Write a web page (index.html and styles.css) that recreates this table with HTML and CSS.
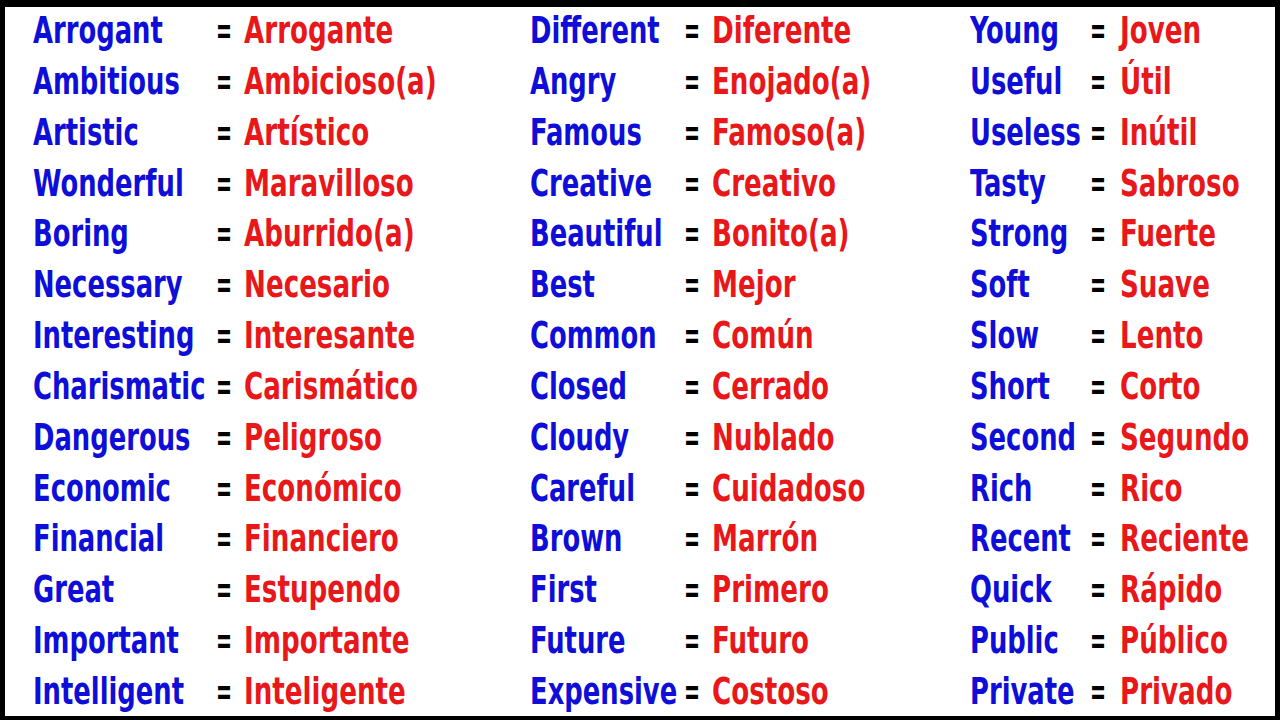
FILE: index.html
```html
<!DOCTYPE html>
<html lang="en">
<head>
<meta charset="utf-8">
<title>Vocabulary</title>
<link rel="stylesheet" href="styles.css">
</head>
<body>
<main class="frame">
  <section class="col col-a">
    <span class="en">Arrogant</span><span class="eq">=</span><span class="es">Arrogante</span>
    <span class="en">Ambitious</span><span class="eq">=</span><span class="es">Ambicioso(a)</span>
    <span class="en">Artistic</span><span class="eq">=</span><span class="es">Artístico</span>
    <span class="en">Wonderful</span><span class="eq">=</span><span class="es">Maravilloso</span>
    <span class="en">Boring</span><span class="eq">=</span><span class="es">Aburrido(a)</span>
    <span class="en">Necessary</span><span class="eq">=</span><span class="es">Necesario</span>
    <span class="en">Interesting</span><span class="eq">=</span><span class="es">Interesante</span>
    <span class="en">Charismatic</span><span class="eq">=</span><span class="es">Carismático</span>
    <span class="en">Dangerous</span><span class="eq">=</span><span class="es">Peligroso</span>
    <span class="en">Economic</span><span class="eq">=</span><span class="es">Económico</span>
    <span class="en">Financial</span><span class="eq">=</span><span class="es">Financiero</span>
    <span class="en">Great</span><span class="eq">=</span><span class="es">Estupendo</span>
    <span class="en">Important</span><span class="eq">=</span><span class="es">Importante</span>
    <span class="en">Intelligent</span><span class="eq">=</span><span class="es">Inteligente</span>
  </section>
  <section class="col col-b">
    <span class="en">Different</span><span class="eq">=</span><span class="es">Diferente</span>
    <span class="en">Angry</span><span class="eq">=</span><span class="es">Enojado(a)</span>
    <span class="en">Famous</span><span class="eq">=</span><span class="es">Famoso(a)</span>
    <span class="en">Creative</span><span class="eq">=</span><span class="es">Creativo</span>
    <span class="en">Beautiful</span><span class="eq">=</span><span class="es">Bonito(a)</span>
    <span class="en">Best</span><span class="eq">=</span><span class="es">Mejor</span>
    <span class="en">Common</span><span class="eq">=</span><span class="es">Común</span>
    <span class="en">Closed</span><span class="eq">=</span><span class="es">Cerrado</span>
    <span class="en">Cloudy</span><span class="eq">=</span><span class="es">Nublado</span>
    <span class="en">Careful</span><span class="eq">=</span><span class="es">Cuidadoso</span>
    <span class="en">Brown</span><span class="eq">=</span><span class="es">Marrón</span>
    <span class="en">First</span><span class="eq">=</span><span class="es">Primero</span>
    <span class="en">Future</span><span class="eq">=</span><span class="es">Futuro</span>
    <span class="en">Expensive</span><span class="eq">=</span><span class="es">Costoso</span>
  </section>
  <section class="col col-c">
    <span class="en">Young</span><span class="eq">=</span><span class="es">Joven</span>
    <span class="en">Useful</span><span class="eq">=</span><span class="es">Útil</span>
    <span class="en">Useless</span><span class="eq">=</span><span class="es">Inútil</span>
    <span class="en">Tasty</span><span class="eq">=</span><span class="es">Sabroso</span>
    <span class="en">Strong</span><span class="eq">=</span><span class="es">Fuerte</span>
    <span class="en">Soft</span><span class="eq">=</span><span class="es">Suave</span>
    <span class="en">Slow</span><span class="eq">=</span><span class="es">Lento</span>
    <span class="en">Short</span><span class="eq">=</span><span class="es">Corto</span>
    <span class="en">Second</span><span class="eq">=</span><span class="es">Segundo</span>
    <span class="en">Rich</span><span class="eq">=</span><span class="es">Rico</span>
    <span class="en">Recent</span><span class="eq">=</span><span class="es">Reciente</span>
    <span class="en">Quick</span><span class="eq">=</span><span class="es">Rápido</span>
    <span class="en">Public</span><span class="eq">=</span><span class="es">Público</span>
    <span class="en">Private</span><span class="eq">=</span><span class="es">Privado</span>
  </section>
</main>
</body>
</html>
```

FILE: styles.css
```css
html, body {
  margin: 0;
  padding: 0;
  background: #000;
}

body {
  width: 1280px;
  height: 720px;
  overflow: hidden;
}

.frame {
  margin: 7px 5px 0 5px;
  height: 709px;
  background: #fff;
  display: grid;
  grid-template-columns: 497px 440px 1fr;
  padding-left: 28px;
  overflow: hidden;
  font-family: "DejaVu Sans Condensed", "DejaVu Sans", sans-serif;
  font-weight: 700;
  font-size: 38px;
}

.col {
  display: grid;
  grid-template-rows: repeat(14, 50.85px);
  align-items: start;
  line-height: 46px;
  white-space: nowrap;
}

.col-a { grid-template-columns: 185px 26px 1fr; }
.col-b { grid-template-columns: 156px 26px 1fr; }
.col-c { grid-template-columns: 122px 28px 1fr; }

.en,
.es,
.eq {
  justify-self: start;
  transform-origin: 0 50%;
}

.en {
  color: #0e0ed8;
  transform: scaleX(0.755);
}

.es {
  color: #e8171a;
  transform: scaleX(0.765);
}

.eq {
  color: #000;
  margin-left: -2px;
  transform: scaleX(0.56);
}
```
